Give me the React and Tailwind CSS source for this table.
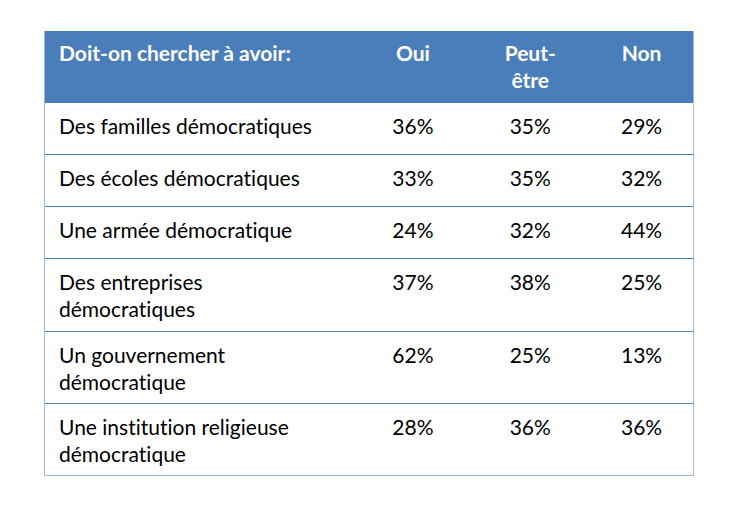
export default function App() {
  const rows = [
    { label: ["Des familles démocratiques"], v: ["36%", "35%", "29%"], h: "h-[51px]" },
    { label: ["Des écoles démocratiques"], v: ["33%", "35%", "32%"], h: "h-[52px]" },
    { label: ["Une armée démocratique"], v: ["24%", "32%", "44%"], h: "h-[52px]" },
    { label: ["Des entreprises", "démocratiques"], v: ["37%", "38%", "25%"], h: "h-[73px]" },
    { label: ["Un gouvernement", "démocratique"], v: ["62%", "25%", "13%"], h: "h-[72px]" },
    { label: ["Une institution religieuse", "démocratique"], v: ["28%", "36%", "36%"], h: "h-[72px]" },
  ];
  return (
    <div className="w-[754px] h-[513px] bg-white pt-[31px] pl-[44px] [font-variant-ligatures:none]" style={{ fontFamily: "Lato, 'Open Sans', sans-serif" }}>
      <div className="w-[650px] border-l border-r border-b border-[#9db6dc]">
        <div className="flex h-[72px] bg-[#4a7ebb] text-white font-bold text-[21px] leading-[27px] pt-[8px]">
          <div className="w-[311px] pl-[14px]">Doit-on chercher à avoir:</div>
          <div className="w-[115px] text-center">Oui</div>
          <div className="w-[120px] text-center">Peut-<br />être</div>
          <div className="w-[103px] text-center">Non</div>
        </div>
        {rows.map((r, i) => (
          <div key={i} className={`flex ${r.h} ${i > 0 ? "border-t border-[#4f81bd]" : ""} text-[21px] leading-[27px] text-black pt-[9px]`}>
            <div className="w-[311px] pl-[14px]">
              {r.label.map((l, j) => (
                <div key={j}>{l}</div>
              ))}
            </div>
            <div className="w-[115px] text-center">{r.v[0]}</div>
            <div className="w-[120px] text-center">{r.v[1]}</div>
            <div className="w-[103px] text-center">{r.v[2]}</div>
          </div>
        ))}
      </div>
    </div>
  );
}
